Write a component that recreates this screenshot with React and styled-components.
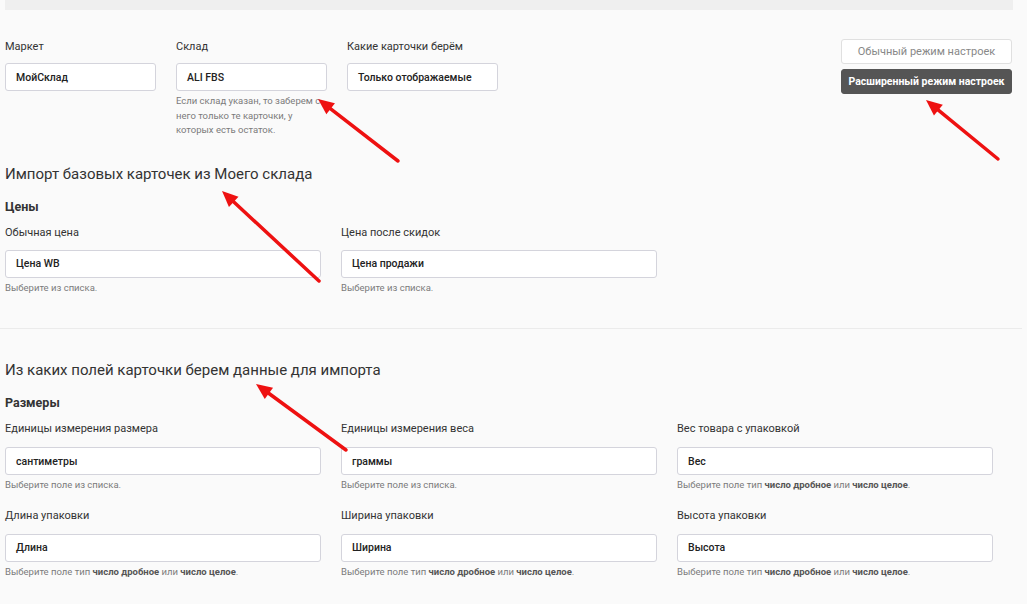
import React from "react";
import styled, { createGlobalStyle } from "styled-components";

const Global = createGlobalStyle`
  html, body { margin: 0; padding: 0; background: #fafafa; }
  body { font-family: Roboto, "Noto Sans", sans-serif; color: #333; }
  * { box-sizing: border-box; }
`;

const Page = styled.div`
  position: relative;
  width: 1027px;
  height: 604px;
  overflow: hidden;
  background: #fafafa;
`;

const TopStrip = styled.div`
  margin-left: 5px;
  width: 1008px;
  height: 10px;
  background: #efefef;
`;

const Section = styled.section`
  padding: ${(p) => p.$pad || "0 0 0 5px"};
`;

const TopRow = styled.div`
  display: flex;
  justify-content: space-between;
  align-items: flex-start;
  padding: 29px 15px 0 5px;
`;

const Fields = styled.div`
  display: flex;
  gap: 20px;
`;

const Field = styled.div`
  display: flex;
  flex-direction: column;
  width: ${(p) => p.$w || 316}px;
`;

const Label = styled.label`
  font-size: 11px;
  line-height: 16px;
  color: #333;
  margin-bottom: ${(p) => p.$mb ?? 8}px;
`;

const Input = styled.div`
  height: 28px;
  background: #fff;
  border: 1px solid #d4d4dc;
  border-radius: 3px;
  padding: 0 10px;
  display: flex;
  align-items: center;
  font-size: 10.5px;
  font-weight: 500;
  color: #222;
`;

const Help = styled.div`
  margin-top: 3px;
  font-size: 9.5px;
  line-height: 14.5px;
  color: #7a7a7a;
  b { font-weight: 700; color: #555; }
`;

const Modes = styled.div`
  display: flex;
  flex-direction: column;
  gap: 5px;
  width: 171px;
`;

const ModeButton = styled.button`
  height: 25px;
  border-radius: 3px;
  font-family: inherit;
  font-size: ${(p) => (p.$active ? "10.5px" : "11px")};
  padding: 0;
  border: 1px solid ${(p) => (p.$active ? "#555" : "#e0e0e0")};
  background: ${(p) => (p.$active ? "#555" : "#fff")};
  color: ${(p) => (p.$active ? "#fff" : "#888")};
  font-weight: ${(p) => (p.$active ? 700 : 400)};
`;

const Heading = styled.h2`
  margin: 0;
  font-size: 15px;
  line-height: 20px;
  font-weight: 400;
  color: #333;
`;

const SubHeading = styled.h3`
  margin: 15px 0 10px;
  font-size: 12.5px;
  line-height: 16px;
  font-weight: 700;
  color: #333;
`;

const Grid = styled.div`
  display: grid;
  grid-template-columns: repeat(${(p) => p.$cols || 3}, 316px);
  column-gap: 20px;
  row-gap: 15px;
`;

const Divider = styled.hr`
  margin: 33px 0 31px;
  width: 1022px;
  border: 0;
  border-top: 1px solid #ebebeb;
`;

const Overlay = styled.svg`
  position: absolute;
  left: 0;
  top: 0;
  pointer-events: none;
`;

const arrows = [
  [398, 161, 318, 99],
  [998, 159, 926, 100],
  [319, 281, 222, 191],
  [346, 450, 256, 384],
];

function Arrow({ x1, y1, x2, y2 }) {
  const dx = x2 - x1;
  const dy = y2 - y1;
  const len = Math.hypot(dx, dy);
  const ux = dx / len;
  const uy = dy / len;
  const hl = 16;
  const hw = 7;
  const bx = x2 - ux * hl;
  const by = y2 - uy * hl;
  const px = -uy;
  const py = ux;
  const pts = `${x2},${y2} ${bx + px * hw},${by + py * hw} ${bx - px * hw},${by - py * hw}`;
  return (
    <g>
      <line x1={x1} y1={y1} x2={bx + ux * 2} y2={by + uy * 2} stroke="#ee1111" strokeWidth="3.5" strokeLinecap="round" />
      <polygon points={pts} fill="#ee1111" />
    </g>
  );
}

const fieldHelp = (
  <>
    Выберите поле тип <b>число дробное</b> или <b>число целое</b>.
  </>
);

export default function App() {
  return (
    <Page>
      <Global />
      <TopStrip />
      <TopRow>
        <Fields>
          <Field $w={151}>
            <Label>Маркет</Label>
            <Input>МойСклад</Input>
          </Field>
          <Field $w={151}>
            <Label>Склад</Label>
            <Input>ALI FBS</Input>
            <Help>
              Если склад указан, то заберем с<br />
              него только те карточки, у<br />
              которых есть остаток.
            </Help>
          </Field>
          <Field $w={151}>
            <Label>Какие карточки берём</Label>
            <Input>Только отображаемые</Input>
          </Field>
        </Fields>
        <Modes>
          <ModeButton>Обычный режим настроек</ModeButton>
          <ModeButton $active>Расширенный режим настроек</ModeButton>
        </Modes>
      </TopRow>

      <Section $pad="26px 0 0 5px">
        <Heading>Импорт базовых карточек из Моего склада</Heading>
        <SubHeading>Цены</SubHeading>
        <Grid $cols={2}>
          <Field>
            <Label $mb={9}>Обычная цена</Label>
            <Input>Цена WB</Input>
            <Help>Выберите из списка.</Help>
          </Field>
          <Field>
            <Label $mb={9}>Цена после скидок</Label>
            <Input>Цена продажи</Input>
            <Help>Выберите из списка.</Help>
          </Field>
        </Grid>
      </Section>

      <Divider />

      <Section>
        <Heading>Из каких полей карточки берем данные для импорта</Heading>
        <SubHeading>Размеры</SubHeading>
        <Grid>
          <Field>
            <Label $mb={10}>Единицы измерения размера</Label>
            <Input>сантиметры</Input>
            <Help>Выберите поле из списка.</Help>
          </Field>
          <Field>
            <Label $mb={10}>Единицы измерения веса</Label>
            <Input>граммы</Input>
            <Help>Выберите поле из списка.</Help>
          </Field>
          <Field>
            <Label $mb={10}>Вес товара с упаковкой</Label>
            <Input>Вес</Input>
            <Help>{fieldHelp}</Help>
          </Field>
          <Field>
            <Label $mb={10}>Длина упаковки</Label>
            <Input>Длина</Input>
            <Help>{fieldHelp}</Help>
          </Field>
          <Field>
            <Label $mb={10}>Ширина упаковки</Label>
            <Input>Ширина</Input>
            <Help>{fieldHelp}</Help>
          </Field>
          <Field>
            <Label $mb={10}>Высота упаковки</Label>
            <Input>Высота</Input>
            <Help>{fieldHelp}</Help>
          </Field>
        </Grid>
      </Section>

      <Overlay width="1027" height="604" viewBox="0 0 1027 604">
        {arrows.map(([x1, y1, x2, y2], i) => (
          <Arrow key={i} x1={x1} y1={y1} x2={x2} y2={y2} />
        ))}
      </Overlay>
    </Page>
  );
}
